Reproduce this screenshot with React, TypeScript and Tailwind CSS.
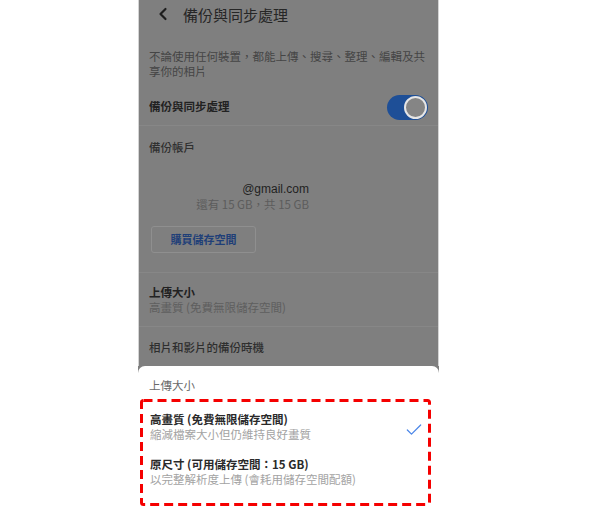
import { ChevronLeft, Check } from "lucide-react";

const font = "font-['Noto_Sans_CJK_TC','Noto_Sans',sans-serif]";

const Divider = () => <div className="h-px bg-[#878787]" />;

const App = () => {
  return (
    <div className={`w-[600px] h-[517px] bg-white flex pl-[138px] ${font}`}>
      <div className="w-[301px] h-full flex flex-col bg-[#7f7f7f]">
        {/* dimmed settings page */}
        <div className="h-[366px] flex flex-col border-x border-[#d4d4d4]">
          <div className="h-[28px] flex items-center pl-[14px]">
            <ChevronLeft size={20} strokeWidth={2.6} className="text-[#1e1e1e]" />
            <span className="ml-[10px] text-[15px] text-[#262626] leading-none">備份與同步處理</span>
          </div>

          <p className="mt-[21px] pl-[10px] text-[11.5px] leading-[15px] text-[#454545]">
            不論使用任何裝置，都能上傳、搜尋、整理、編輯及共
            <br />
            享你的相片
          </p>

          <div className="mt-[13px] h-[30px] flex items-center justify-between pl-[10px] pr-[10px]">
            <span className="text-[11.5px] font-bold text-[#222]">備份與同步處理</span>
            <div className="w-[41px] h-[25px] rounded-full bg-[#1e4f97] flex items-center justify-end pr-[1px]">
              <div className="w-[23px] h-[23px] rounded-full bg-[#858585] border-2 border-[#e6e6e6]" />
            </div>
          </div>

          <div className="mt-[3px]">
            <Divider />
          </div>

          <div className="mt-[14px] pl-[10px] text-[11.5px] leading-[14px] font-medium text-[#303030]">備份帳戶</div>

          <div className="mt-[28px] w-[170px] text-right">
            <div className="text-[12px] leading-[15px] font-medium text-[#1f1f1f] font-['Liberation_Sans','Noto_Sans_CJK_TC',sans-serif]">@gmail.com</div>
            <div className="text-[11.5px] leading-[15px] text-[#5c5c5c]">還有 15 GB，共 15 GB</div>
          </div>

          <div className="mt-[14px] ml-[12px] w-[105px] h-[27px] rounded-[3px] border border-[#8f8f8f] flex items-center justify-center">
            <span className="text-[11px] font-bold text-[#1f3f78]">購買儲存空間</span>
          </div>

          <div className="mt-[19px]">
            <Divider />
          </div>

          <div className="mt-[12px] pl-[10px] text-[11.5px] leading-[15px]">
            <div className="font-bold text-[#222]">上傳大小</div>
            <div className="text-[#5e5e5e]">高畫質 (免費無限儲存空間)</div>
          </div>

          <div className="mt-[11px]">
            <Divider />
          </div>

          <div className="mt-[13px] pl-[10px] text-[11.5px] leading-[14px] font-medium text-[#2e2e2e]">相片和影片的備份時機</div>
        </div>

        {/* bottom sheet */}
        <div className="flex-1 bg-white rounded-t-[7px] pt-[12px]">
          <div className="pl-[11px] text-[11.5px] leading-[14px] text-[#6a6a6a]">上傳大小</div>

          <div className="relative mt-[7px] ml-[2px] w-[291px] h-[107px] pt-[13px] pl-[10px] pr-[7px]">
            <svg className="absolute inset-0" width="291" height="107">
              <rect x="1.5" y="1.5" width="288" height="104" rx="2" fill="none" stroke="#f50000" strokeWidth="3" strokeDasharray="9 5" />
            </svg>

            <div className="flex items-center justify-between">
              <div className="text-[11.5px] leading-[15px]">
                <div className="font-bold text-[#2a2a2a]">高畫質 (免費無限儲存空間)</div>
                <div className="text-[#a3a3a3]">縮減檔案大小但仍維持良好畫質</div>
              </div>
              <Check size={20} strokeWidth={1.5} className="text-[#4a86e8] mt-[6px]" />
            </div>

            <div className="mt-[15px] text-[11.5px] leading-[15px]">
              <div className="font-bold text-[#2a2a2a]">原尺寸 (可用儲存空間：15 GB)</div>
              <div className="text-[#a3a3a3]">以完整解析度上傳 (會耗用儲存空間配額)</div>
            </div>
          </div>
        </div>
      </div>
    </div>
  );
};

export default App;
